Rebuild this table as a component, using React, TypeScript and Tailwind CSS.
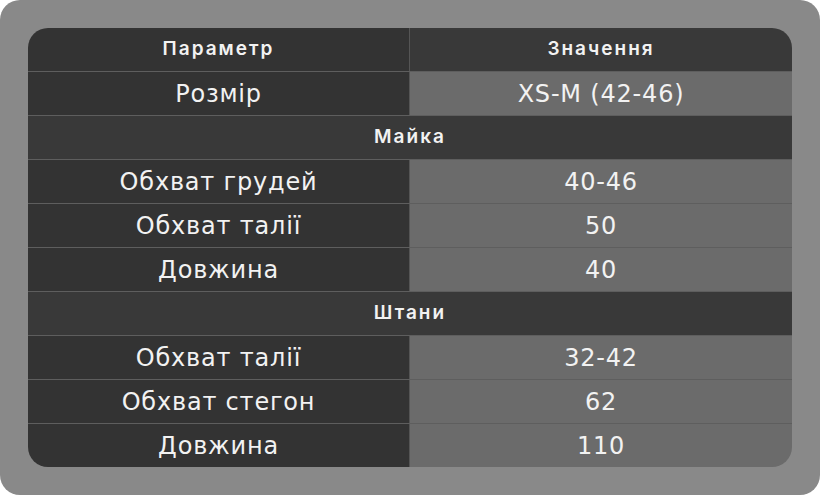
import React from "react";

type Row =
  | { kind: "section"; label: string }
  | { kind: "data"; name: string; value: string };

const rows: Row[] = [
  { kind: "data", name: "Розмір", value: "XS-M (42-46)" },
  { kind: "section", label: "Майка" },
  { kind: "data", name: "Обхват грудей", value: "40-46" },
  { kind: "data", name: "Обхват талії", value: "50" },
  { kind: "data", name: "Довжина", value: "40" },
  { kind: "section", label: "Штани" },
  { kind: "data", name: "Обхват талії", value: "32-42" },
  { kind: "data", name: "Обхват стегон", value: "62" },
  { kind: "data", name: "Довжина", value: "110" },
];

const headCell =
  "flex items-center justify-center font-['Inter'] text-[19px] font-semibold tracking-[2px]";
const bodyCell =
  "flex items-center justify-center font-['DejaVu_Sans'] text-[24px] tracking-[0.8px]";

export default function App() {
  return (
    <div className="w-[820px] h-[495px] bg-white">
      <div className="w-full h-full rounded-[20px] bg-[#898989] p-[28px]">
        <div className="rounded-[20px] overflow-hidden text-[#f2f2f2]">
          {/* Header */}
          <div className="grid grid-cols-2 h-[44px] border-b border-[#5e5e5e]">
            <div className={`bg-[#333333] border-r border-[#555555] ${headCell}`}>Параметр</div>
            <div className={`bg-[#393939] ${headCell}`}>Значення</div>
          </div>

          {rows.map((r, i) => {
            const last = i === rows.length - 1;
            if (r.kind === "section") {
              return (
                <div key={i} className={`h-[44px] bg-[#393939] border-b border-[#5e5e5e] ${headCell}`}>
                  {r.label}
                </div>
              );
            }
            return (
              <div
                key={i}
                className={`grid grid-cols-2 ${last ? "h-[43px]" : "h-[44px] border-b border-[#5e5e5e]"}`}
              >
                <div className={`bg-[#333333] border-r border-[#555555] ${bodyCell}`}>{r.name}</div>
                <div className={`bg-[#6b6b6b] ${bodyCell}`}>{r.value}</div>
              </div>
            );
          })}
        </div>
      </div>
    </div>
  );
}
